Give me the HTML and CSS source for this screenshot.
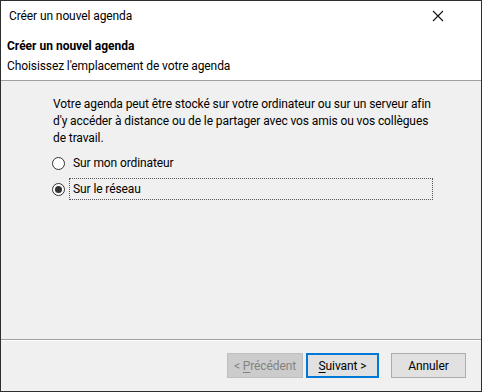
FILE: index.html
```html
<!DOCTYPE html>
<html lang="fr">
<head>
<meta charset="utf-8">
<title>Créer un nouvel agenda</title>
<link rel="stylesheet" href="styles.css">
</head>
<body>
<div class="window">
  <div class="titlebar">
    <span class="title">Créer un nouvel agenda</span>
    <svg class="close" width="12" height="12" viewBox="0 0 12 12">
      <path d="M1 1 L11 11 M11 1 L1 11" stroke="#111" stroke-width="1.1" fill="none"/>
    </svg>
  </div>

  <div class="header">
    <div class="header-title">Créer un nouvel agenda</div>
    <div class="header-sub">Choisissez l'emplacement de votre agenda</div>
  </div>

  <div class="content">
    <p class="intro">Votre agenda peut être stocké sur votre ordinateur ou sur un serveur afin d'y accéder à distance ou de le partager avec vos amis ou vos collègues de travail.</p>
    <div class="option">
      <span class="radio"></span>
      <span class="label">Sur mon ordinateur</span>
    </div>
    <div class="option">
      <span class="radio checked"></span>
      <span class="label focused">Sur le réseau</span>
    </div>
  </div>

  <div class="footer">
    <button class="btn disabled">&lt; <u>P</u>récédent</button>
    <button class="btn default"><u>S</u>uivant &gt;</button>
    <button class="btn cancel">Annuler</button>
  </div>
</div>
</body>
</html>
```

FILE: styles.css
```css
* { box-sizing: border-box; }
html, body {
  margin: 0;
  padding: 0;
}
body {
  font-family: Roboto, 'Noto Sans', sans-serif;
  font-size: 12px;
  letter-spacing: -0.1px;
  color: #000;
  background: #f0f0f0;
}
.window {
  width: 482px;
  height: 392px;
  border: 1px solid #2e2e2e;
  display: flex;
  flex-direction: column;
  background: #f0f0f0;
}
.titlebar {
  height: 30px;
  background: #fff;
  display: flex;
  align-items: center;
  justify-content: space-between;
  padding: 0 37px 0 8px;
}
.title { font-size: 12px; line-height: 16px; }
.header {
  height: 50px;
  background: #fff;
  border-bottom: 1px solid #a0a0a0;
  padding: 7px 0 0 6px;
}
.header-title {
  font-weight: bold;
  letter-spacing: 0;
  line-height: 17px;
}
.header-sub {
  line-height: 17px;
  margin-top: 3px;
}
.content {
  flex: 1;
  padding: 15px 40px 0 51px;
}
.intro {
  margin: 0 0 5px 0;
  padding-left: 1px;
  line-height: 17px;
}
.option {
  display: flex;
  align-items: center;
  height: 22px;
  margin-bottom: 4px;
  margin-right: 8px;
}
.radio {
  width: 13px;
  height: 13px;
  border: 1px solid #333;
  border-radius: 50%;
  background: #fff;
  margin-right: 4px;
  display: flex;
  align-items: center;
  justify-content: center;
}
.radio.checked::after {
  content: '';
  width: 7px;
  height: 7px;
  border-radius: 50%;
  background: #333;
}
.label {
  flex: 1;
  padding: 2px 3px;
  line-height: 16px;
  border: 1px dotted transparent;
}
.label.focused { border-color: #555; }
.footer {
  height: 52px;
  border-top: 1px solid #a0a0a0;
  box-shadow: inset 0 1px 0 #fff;
  display: flex;
  justify-content: flex-end;
  align-items: flex-start;
  padding: 13px 15px 0 0;
}
.btn {
  font-family: inherit;
  font-size: 12px;
  letter-spacing: inherit;
  height: 25px;
  background: #e1e1e1;
  border: 1px solid #adadad;
  color: #000;
  padding: 0;
  margin: 0;
}
.btn u { text-decoration-thickness: 1px; text-underline-offset: 2px; }
.disabled {
  width: 76px;
  background: #cccccc;
  border-color: #bfbfbf;
  color: #838383;
}
.default {
  width: 73px;
  margin-left: 3px;
  border: 2px solid #0078d7;
}
.cancel {
  width: 75px;
  margin-left: 12px;
}
```
